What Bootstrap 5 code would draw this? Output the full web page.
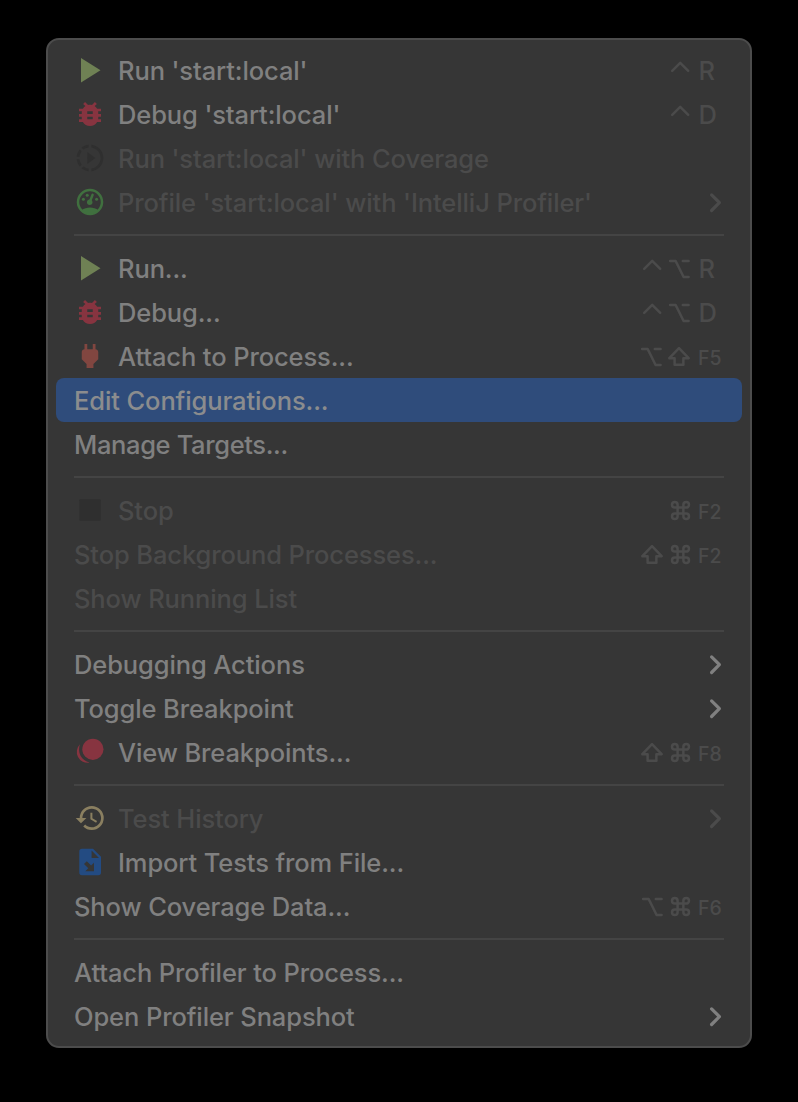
<!DOCTYPE html>
<html lang="en" data-bs-theme="dark">
<head>
<meta charset="utf-8">
<meta name="viewport" content="width=device-width, initial-scale=1">
<title>Run menu</title>
<link href="https://cdn.jsdelivr.net/npm/bootstrap@5.3.0/dist/css/bootstrap.min.css" rel="stylesheet">
<style>
  body { background: #000; font-family: Inter, "Liberation Sans", sans-serif; }
  .run-menu {
    width: 706px; margin: 38px 0 0 46px; padding: 8px;
    background: #363636; border: 2px solid #4c4c4c; border-radius: 13px;
    --bs-dropdown-link-color: #808080;
  }
  .run-menu .dropdown-item {
    height: 44px; padding: 0 17px 0 18px; border-radius: 8px;
    font-size: 25.5px; font-weight: 500; line-height: 45px; letter-spacing: -.11px; color: #808080;
  }
  .run-menu .dropdown-item.active { background: #2f4c7b; color: #8b8c8e; }
  .run-menu .dropdown-item.disabled { color: #4b4b4b; }
  .run-menu .dropdown-divider { margin: 10px 18px; border-top: 2px solid #444; opacity: 1; }
  .run-menu .tight { letter-spacing: -.36px; }
  .glyph { width: 32px; height: 32px; margin-right: 12px; flex: none; }
  .keys { color: #4b4b4b; letter-spacing: 0; height: 44px; }
  .keys svg { width: 28px; height: 44px; flex: none; fill: none; stroke: currentColor; stroke-width: 2.5; stroke-linecap: round; stroke-linejoin: round; }
  .keys svg.cmd { width: 27px; }
  .keycap { width: 31px; padding-left: 4.500px; flex: none; }
  .fkey { padding-left: 4px; font-size: 19.5px; line-height: 49px; }
  .arrow { width: 16px; height: 44px; fill: none; stroke: currentColor; stroke-width: 3.2; stroke-linecap: round; stroke-linejoin: round; }
  .c-play { color: #6f8154; } .c-bug { color: #873440; } .c-plug { color: #814640; }
  .c-dim { color: #2f2f2f; } .c-gauge { color: #40703f; } .c-hist { color: #8a7f60; } .c-file { color: #234b82; }
</style>
</head>
<body>
<svg class="d-none">
  <symbol id="play" viewBox="0 0 32 32"><path fill="currentColor" d="M7 4L26.5 16.3L7 28.6Z"/></symbol>
  <symbol id="bug" viewBox="0 0 32 32"><path fill="currentColor" transform="translate(-.5 0) scale(1.375 1.333)" d="M20 8h-2.81c-.45-.78-1.07-1.45-1.82-1.96L17 4.41 15.59 3l-2.17 2.17C12.96 5.06 12.49 5 12 5c-.49 0-.96.06-1.41.17L8.41 3 7 4.41l1.62 1.63C7.88 6.55 7.26 7.22 6.81 8H4v2h2.09c-.05.33-.09.66-.09 1v1H4v2h2v1c0 .34.04.67.09 1H4v2h2.81c1.04 1.79 2.97 3 5.19 3s4.15-1.21 5.19-3H20v-2h-2.09c.05-.33.09-.66.09-1v-1h2v-2h-2v-1c0-.34-.04-.67-.09-1H20V8zm-6 8h-4v-2h4v2zm0-4h-4v-2h4v2z"/></symbol>
  <symbol id="coverage" viewBox="0 0 24 24"><path fill="currentColor" d="M10 7.5v9L16 12zM11 4.07V2.05c-2.01.2-3.84 1-5.32 2.21L7.1 5.69c1.11-.86 2.44-1.44 3.9-1.62zM5.69 7.1L4.26 5.68C3.05 7.16 2.25 8.99 2.05 11h2.02c.18-1.46.76-2.79 1.62-3.9zM4.07 13H2.05c.2 2.01 1 3.84 2.21 5.32l1.43-1.43c-.86-1.1-1.44-2.43-1.62-3.89zm1.61 6.74C7.16 20.95 9 21.75 11 21.95v-2.02c-1.46-.18-2.79-.76-3.9-1.62l-1.42 1.43zM22 12c0 5.16-3.92 9.42-8.95 9.95v-2.02C16.97 19.41 20 16.05 20 12s-3.03-7.41-6.95-7.93V2.05C18.08 2.58 22 6.84 22 12z"/></symbol>
  <symbol id="gauge" viewBox="0 0 32 32"><circle cx="16" cy="16" r="12" fill="none" stroke="currentColor" stroke-width="2.500"/><g fill="currentColor"><path d="M7.500 24.500C10 22.500 13 21.600 16 21.600S22 22.500 24.500 24.500C22.500 27 19.500 28.500 16 28.500S9.500 27 7.500 24.500Z"/><circle cx="9.400" cy="13.300" r="1.500"/><circle cx="13.200" cy="9.200" r="1.500"/><circle cx="22.600" cy="13.300" r="1.500"/><circle cx="15.700" cy="16.200" r="2.700"/></g><path d="M16.200 15L18.600 8.800" stroke="currentColor" stroke-width="2.400" stroke-linecap="round"/></symbol>
  <symbol id="plug" viewBox="0 0 32 32"><path fill="currentColor" transform="translate(-.5 0) scale(1.375 1.333)" d="M16.010 7L16 3h-2v4h-4V3H8v4h-.010C7 6.990 6 7.990 6 8.990v5.490L9.500 18v3h5v-3l3.500-3.510v-5.500c0-1-1-2-1.990-1.990z"/></symbol>
  <symbol id="stop" viewBox="0 0 32 32"><rect x="5.300" y="5.300" width="21.400" height="21.400" rx="1" fill="currentColor"/></symbol>
  <symbol id="points" viewBox="0 0 32 32"><circle cx="18.900" cy="13.300" r="10.600" fill="currentColor"/><path fill="currentColor" d="M6 8.300A10.800 10.800 0 0 0 15.500 26.600A13.600 13.600 0 0 1 6 8.300Z"/></symbol>
  <symbol id="history" viewBox="0 0 32 32"><path fill="currentColor" transform="translate(.4 0) scale(1.333)" d="M13 3a9 9 0 0 0-9 9H1l3.890 3.890.07.14L9 12H6c0-3.870 3.130-7 7-7s7 3.130 7 7-3.130 7-7 7c-1.930 0-3.680-.79-4.940-2.060l-1.420 1.420A8.954 8.954 0 0 0 13 21a9 9 0 0 0 0-18zm-1 5v5l4.280 2.540.72-1.210-3.500-2.080V8H12z"/></symbol>
  <symbol id="import" viewBox="0 0 32 32"><path fill="currentColor" fill-rule="evenodd" d="M8 2.700H19L27 10.700V26.600Q27 29.300 24.300 29.300H8Q5.300 29.300 5.300 26.600V5.400Q5.300 2.700 8 2.700ZM17.600 4.500V12H25ZM20 16.700V25.300H11.300L14.300 22.300L10 18L12.800 15.200L17.100 19.600Z"/></symbol>
  <symbol id="ctrl" viewBox="0 0 28 44"><path d="M6.200 22.900L14.200 14.900L22.200 22.900"/></symbol>
  <symbol id="opt" viewBox="0 0 28 44"><path d="M4.100 15.100H9.700L17.600 31H22.600M16.800 15.100H22.600"/></symbol>
  <symbol id="shift" viewBox="0 0 28 44"><path d="M13 14.200L22.700 24.200H17.400V30.800H8.600V24.200H3.300Z"/></symbol>
  <symbol id="cmd" viewBox="0 0 27 44"><path d="M10.600 19.600H7.800a2.800 2.800 0 1 1 2.800-2.800V28.200a2.800 2.800 0 1 1-2.800-2.800H19.200a2.800 2.800 0 1 1-2.800 2.800V16.800a2.800 2.800 0 1 1 2.800 2.800Z"/></symbol>
  <symbol id="chev" viewBox="0 0 16 44"><path d="M2.600 14.900L10.400 22.700L2.600 30.500"/></symbol>
</svg>

<div class="dropdown-menu show position-static run-menu">
  <a class="dropdown-item d-flex align-items-center"><svg class="glyph c-play"><use href="#play"/></svg><span>Run 'start:local'</span><span class="keys d-flex ms-auto"><svg><use href="#ctrl"/></svg><span class="keycap">R</span></span></a>
  <a class="dropdown-item d-flex align-items-center"><svg class="glyph c-bug"><use href="#bug"/></svg><span>Debug 'start:local'</span><span class="keys d-flex ms-auto"><svg><use href="#ctrl"/></svg><span class="keycap">D</span></span></a>
  <a class="dropdown-item disabled d-flex align-items-center"><svg class="glyph c-dim"><use href="#coverage"/></svg><span>Run 'start:local' with Coverage</span></a>
  <a class="dropdown-item disabled d-flex align-items-center"><svg class="glyph c-gauge"><use href="#gauge"/></svg><span>Profile 'start:local' with 'IntelliJ Profiler'</span><svg class="arrow ms-auto"><use href="#chev"/></svg></a>
  <hr class="dropdown-divider">
  <a class="dropdown-item d-flex align-items-center"><svg class="glyph c-play"><use href="#play"/></svg><span>Run...</span><span class="keys d-flex ms-auto"><svg><use href="#ctrl"/></svg><svg><use href="#opt"/></svg><span class="keycap">R</span></span></a>
  <a class="dropdown-item d-flex align-items-center"><svg class="glyph c-bug"><use href="#bug"/></svg><span>Debug...</span><span class="keys d-flex ms-auto"><svg><use href="#ctrl"/></svg><svg><use href="#opt"/></svg><span class="keycap">D</span></span></a>
  <a class="dropdown-item d-flex align-items-center"><svg class="glyph c-plug"><use href="#plug"/></svg><span>Attach to Process...</span><span class="keys d-flex ms-auto"><svg><use href="#opt"/></svg><svg><use href="#shift"/></svg><span class="keycap fkey">F5</span></span></a>
  <a class="dropdown-item active d-flex align-items-center"><span>Edit Configurations...</span></a>
  <a class="dropdown-item d-flex align-items-center"><span class="tight">Manage Targets...</span></a>
  <hr class="dropdown-divider">
  <a class="dropdown-item disabled d-flex align-items-center"><svg class="glyph c-dim"><use href="#stop"/></svg><span>Stop</span><span class="keys d-flex ms-auto"><svg class="cmd"><use href="#cmd"/></svg><span class="keycap fkey">F2</span></span></a>
  <a class="dropdown-item disabled d-flex align-items-center"><span>Stop Background Processes...</span><span class="keys d-flex ms-auto"><svg><use href="#shift"/></svg><svg class="cmd"><use href="#cmd"/></svg><span class="keycap fkey">F2</span></span></a>
  <a class="dropdown-item disabled d-flex align-items-center"><span>Show Running List</span></a>
  <hr class="dropdown-divider">
  <a class="dropdown-item d-flex align-items-center"><span>Debugging Actions</span><svg class="arrow ms-auto"><use href="#chev"/></svg></a>
  <a class="dropdown-item d-flex align-items-center"><span>Toggle Breakpoint</span><svg class="arrow ms-auto"><use href="#chev"/></svg></a>
  <a class="dropdown-item d-flex align-items-center"><svg class="glyph c-bug"><use href="#points"/></svg><span>View Breakpoints...</span><span class="keys d-flex ms-auto"><svg><use href="#shift"/></svg><svg class="cmd"><use href="#cmd"/></svg><span class="keycap fkey">F8</span></span></a>
  <hr class="dropdown-divider">
  <a class="dropdown-item disabled d-flex align-items-center"><svg class="glyph c-hist"><use href="#history"/></svg><span>Test History</span><svg class="arrow ms-auto"><use href="#chev"/></svg></a>
  <a class="dropdown-item d-flex align-items-center"><svg class="glyph c-file"><use href="#import"/></svg><span>Import Tests from File...</span></a>
  <a class="dropdown-item d-flex align-items-center"><span>Show Coverage Data...</span><span class="keys d-flex ms-auto"><svg><use href="#opt"/></svg><svg class="cmd"><use href="#cmd"/></svg><span class="keycap fkey">F6</span></span></a>
  <hr class="dropdown-divider">
  <a class="dropdown-item d-flex align-items-center"><span>Attach Profiler to Process...</span></a>
  <a class="dropdown-item d-flex align-items-center"><span>Open Profiler Snapshot</span><svg class="arrow ms-auto"><use href="#chev"/></svg></a>
</div>
<script src="https://cdn.jsdelivr.net/npm/bootstrap@5.3.0/dist/js/bootstrap.bundle.min.js"></script>
</body>
</html>
